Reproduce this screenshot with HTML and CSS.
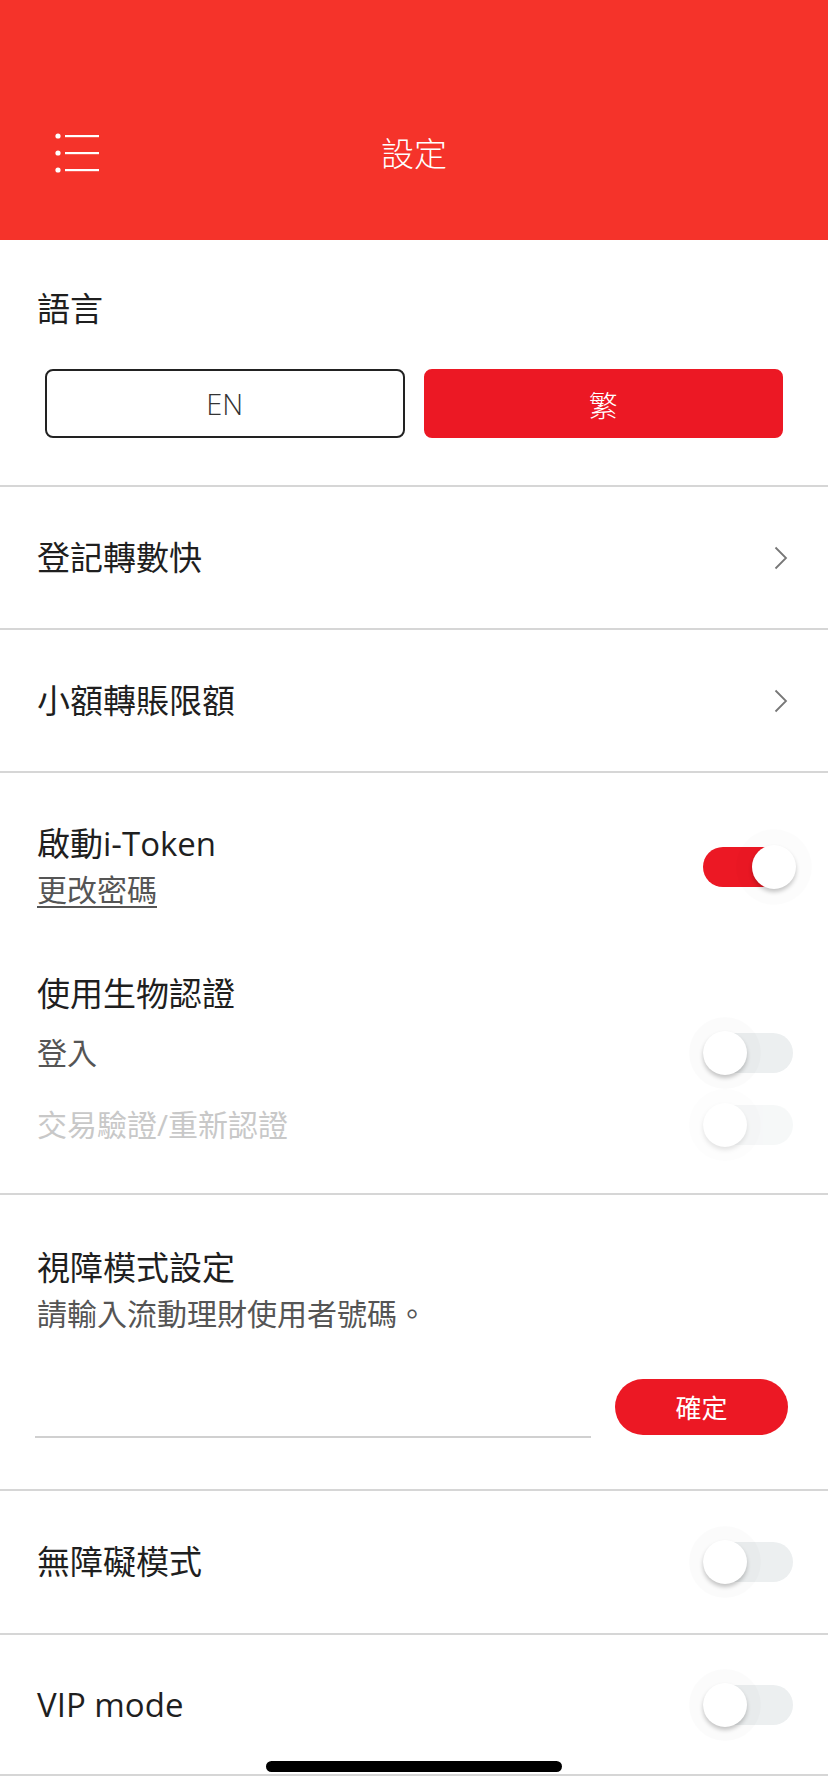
FILE: index.html
```html
<!DOCTYPE html>
<html>
<head>
    <title>設定</title>
    <meta charset="utf-8">
    <link rel="stylesheet" href="styles.css">
</head>
<body>
    <div class="header">
        <div class="menu-btn">
            <svg width="46" height="40" viewBox="0 0 46 40">
                <circle cx="3" cy="3" r="2.6" fill="#fff"/>
                <circle cx="3" cy="20" r="2.6" fill="#fff"/>
                <circle cx="3" cy="37" r="2.6" fill="#fff"/>
                <rect x="10" y="2" width="34" height="2.2" fill="#fff"/>
                <rect x="10" y="19" width="34" height="2.2" fill="#fff"/>
                <rect x="10" y="36" width="34" height="2.2" fill="#fff"/>
            </svg>
        </div>
        <div class="header-title">設定</div>
    </div>

    <div class="section lang">
        <div class="title">語言</div>
        <div class="lang-buttons">
            <div class="lang-btn">EN</div>
            <div class="lang-btn active">繁</div>
        </div>
    </div>

    <div class="section nav-row">
        <div class="title">登記轉數快</div>
        <svg class="chevron" width="14" height="24" viewBox="0 0 14 24">
            <polyline points="1.5,1.5 12,12 1.5,22.5" fill="none" stroke="#777" stroke-width="1.8"/>
        </svg>
    </div>

    <div class="section nav-row">
        <div class="title">小額轉賬限額</div>
        <svg class="chevron" width="14" height="24" viewBox="0 0 14 24">
            <polyline points="1.5,1.5 12,12 1.5,22.5" fill="none" stroke="#777" stroke-width="1.8"/>
        </svg>
    </div>

    <div class="section security">
        <div class="toggle-row">
            <div>
                <div class="title">啟動i-Token</div>
                <div class="sub link">更改密碼</div>
            </div>
            <div class="switch on"><span class="knob"></span></div>
        </div>

        <div class="title bio-title">使用生物認證</div>
        <div class="toggle-row small">
            <div class="sub">登入</div>
            <div class="switch"><span class="knob"></span></div>
        </div>
        <div class="toggle-row small disabled">
            <div class="sub">交易驗證/重新認證</div>
            <div class="switch"><span class="knob"></span></div>
        </div>
    </div>

    <div class="section vision">
        <div class="title">視障模式設定</div>
        <div class="sub">請輸入流動理財使用者號碼。</div>
        <div class="input-row">
            <input type="text" class="user-input">
            <button class="confirm-btn">確定</button>
        </div>
    </div>

    <div class="section switch-row">
        <div class="title">無障礙模式</div>
        <div class="switch"><span class="knob"></span></div>
    </div>

    <div class="section switch-row last">
        <div class="title">VIP mode</div>
        <div class="switch"><span class="knob"></span></div>
    </div>

    <div class="home-bar"></div>
</body>
</html>
```
FILE: styles.css
```css
body {
    margin: 0;
    width: 828px;
    font-family: "Open Sans", "Noto Sans CJK TC", sans-serif;
    color: #1f1f1f;
    background: #fff;
}
.header {
    height: 240px;
    background: #f5332a;
    display: flex;
    align-items: center;
    padding-top: 66px;
    box-sizing: border-box;
    position: relative;
}
.menu-btn {
    margin-left: 55px;
    height: 40px;
}
.header-title {
    position: absolute;
    left: 0;
    right: 0;
    top: 131px;
    text-align: center;
    color: #fff;
    font-size: 33px;
    line-height: 46px;
    font-weight: 300;
    pointer-events: none;
}
.section {
    border-bottom: 2px solid #d6d6d6;
    padding: 0 35px 0 37px;
}
.title {
    font-size: 33px;
    line-height: 46px;
}
.sub {
    font-size: 30px;
    line-height: 46px;
    color: #555;
}
.lang {
    padding-top: 46px;
    padding-bottom: 47px;
}
.lang-buttons {
    display: flex;
    gap: 19px;
    margin: 37px 10px 0 8px;
}
.lang-btn {
    flex: 1;
    height: 69px;
    box-sizing: border-box;
    border: 2px solid #222;
    border-radius: 8px;
    display: flex;
    align-items: center;
    justify-content: center;
    font-size: 29px;
    font-weight: 300;
    color: #333;
}
.lang-btn.active {
    background: #ec1824;
    border-color: #ec1824;
    color: #fff;
}
.nav-row {
    height: 141px;
    display: flex;
    align-items: center;
    justify-content: space-between;
    padding-right: 40px;
}
.security {
    padding-top: 48px;
    padding-bottom: 32px;
}
.toggle-row {
    display: flex;
    align-items: center;
    justify-content: space-between;
}
.toggle-row.small {
    height: 72px;
}
.link {
    text-decoration: underline;
    text-underline-offset: 5px;
    text-decoration-thickness: 2px;
    color: #555;
}
.bio-title {
    margin-top: 58px;
}
.disabled .sub {
    color: #c8c8c8;
}
.disabled .switch {
    opacity: 0.45;
}
.switch {
    position: relative;
    width: 90px;
    height: 40px;
    border-radius: 20px;
    background: #eceff0;
    flex-shrink: 0;
}
.switch.on {
    background: #ec1824;
}
.knob {
    position: absolute;
    top: -2px;
    left: 0;
    width: 44px;
    height: 44px;
    border-radius: 50%;
    background: #fff;
    box-shadow: 0 3px 4px rgba(0, 0, 0, 0.22), 0 0 0 14px rgba(0, 0, 0, 0.015);
}
.switch.on .knob {
    left: auto;
    right: -3px;
    box-shadow: 0 3px 4px rgba(0, 0, 0, 0.22), 0 0 0 16px rgba(0, 0, 0, 0.012);
}
.vision {
    padding-top: 50px;
    padding-bottom: 51px;
    padding-right: 40px;
}
.input-row {
    display: flex;
    align-items: flex-end;
    gap: 24px;
    margin-top: 42px;
}
.user-input {
    flex: 1;
    height: 57px;
    border: none;
    border-bottom: 2px solid #d0d0d0;
    outline: none;
    font-size: 30px;
    margin-left: -2px;
    padding: 0;
}
.confirm-btn {
    width: 173px;
    height: 56px;
    border: none;
    border-radius: 28px;
    background: #ec1824;
    color: #fff;
    font-family: "Open Sans", "Noto Sans CJK TC", sans-serif;
    font-size: 26px;
    margin-bottom: 3px;
    cursor: pointer;
}
.switch-row {
    height: 142px;
    display: flex;
    align-items: center;
    justify-content: space-between;
}
.switch-row.last {
    height: 139px;
}
.home-bar {
    position: fixed;
    left: 266px;
    top: 1761px;
    width: 296px;
    height: 11px;
    border-radius: 6px;
    background: #000;
}
```
